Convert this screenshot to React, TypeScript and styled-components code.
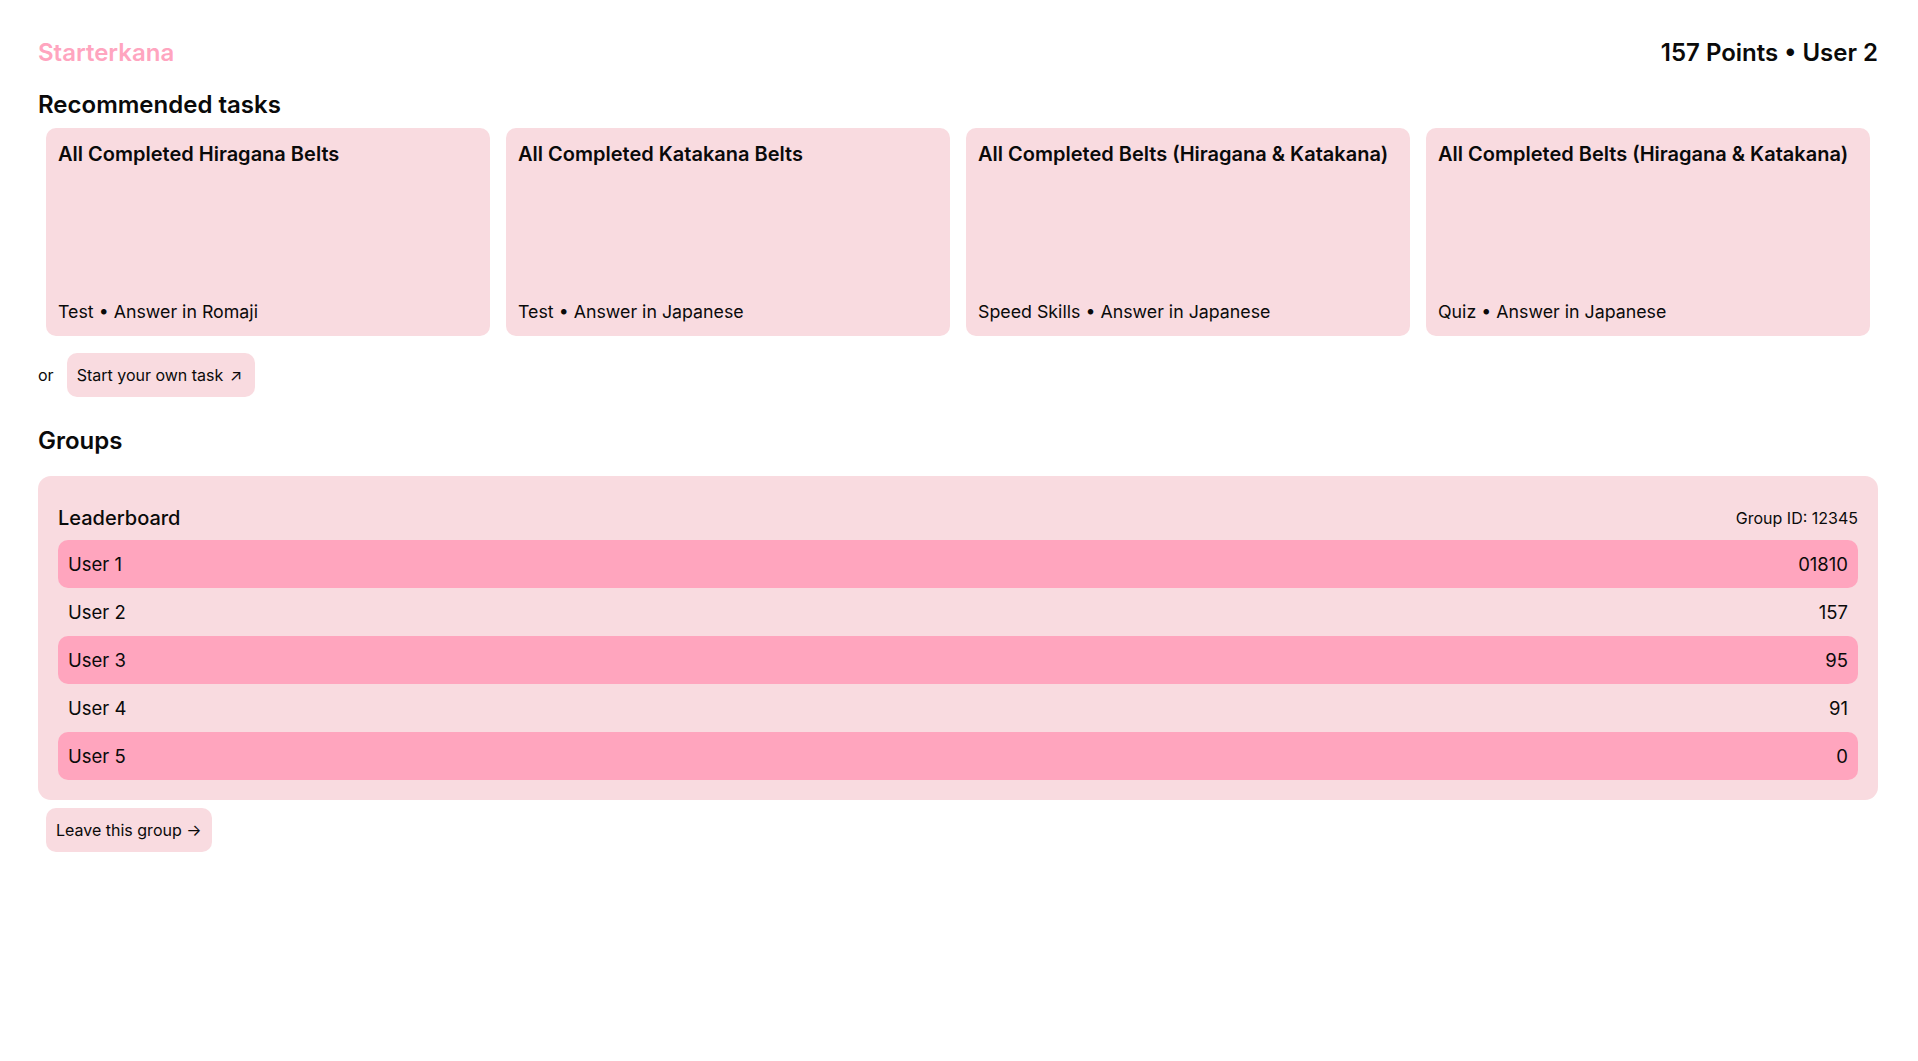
import { styled, createGlobalStyle } from "styled-components";

const GlobalStyle = createGlobalStyle`
  * {
    box-sizing: border-box;
  }

  body {
    margin: 0;
    background: #ffffff;
    color: #0a0a0a;
    font-family: Inter, "Noto Sans", "Liberation Sans", sans-serif;
  }
`;

const tasks = [
  { title: "All Completed Hiragana Belts", meta: "Test • Answer in Romaji" },
  { title: "All Completed Katakana Belts", meta: "Test • Answer in Japanese" },
  {
    title: "All Completed Belts (Hiragana & Katakana)",
    meta: "Speed Skills • Answer in Japanese",
  },
  {
    title: "All Completed Belts (Hiragana & Katakana)",
    meta: "Quiz • Answer in Japanese",
  },
];

const leaderboard = [
  { name: "User 1", points: "01810" },
  { name: "User 2", points: "157" },
  { name: "User 3", points: "95" },
  { name: "User 4", points: "91" },
  { name: "User 5", points: "0" },
];

function App() {
  return (
    <>
      <GlobalStyle />
      <Page>
        <Header>
          <Logo>Starterkana</Logo>
          <UserInfo>157 Points • User 2</UserInfo>
        </Header>

        <SectionTitle>Recommended tasks</SectionTitle>
        <TaskGrid>
          {tasks.map((task, i) => (
            <TaskCard key={i}>
              <TaskTitle>{task.title}</TaskTitle>
              <TaskMeta>{task.meta}</TaskMeta>
            </TaskCard>
          ))}
        </TaskGrid>

        <OwnTaskRow>
          <span>or</span>
          <PinkButton>
            Start your own task <Arrow>↗</Arrow>
          </PinkButton>
        </OwnTaskRow>

        <SectionTitle $spaced>Groups</SectionTitle>
        <GroupBox>
          <GroupHeader>
            <GroupName>Leaderboard</GroupName>
            <GroupId>Group ID: 12345</GroupId>
          </GroupHeader>
          {leaderboard.map((row, i) => (
            <Row key={row.name} $highlight={i % 2 === 0}>
              <span>{row.name}</span>
              <span>{row.points}</span>
            </Row>
          ))}
        </GroupBox>

        <LeaveWrap>
          <PinkButton>Leave this group →</PinkButton>
        </LeaveWrap>
      </Page>
    </>
  );
}

const Page = styled.div`
  padding: 36px 40px 40px 38px;
`;

const Header = styled.header`
  display: flex;
  justify-content: space-between;
  align-items: center;
  height: 34px;
  font-size: 24px;
  line-height: 34px;
  font-weight: 600;
`;

const Logo = styled.div`
  color: #ffa5bf;
`;

const UserInfo = styled.div`
  color: #0a0a0a;
`;

const SectionTitle = styled.h2<{ $spaced?: boolean }>`
  margin: ${(p) => (p.$spaced ? "28px" : "19px")} 0 0;
  font-size: 24px;
  line-height: 32px;
  font-weight: 600;
`;

const TaskGrid = styled.div`
  display: grid;
  grid-template-columns: repeat(4, 1fr);
  gap: 16px;
  margin: 7px 8px 0;
`;

const TaskCard = styled.div`
  display: flex;
  flex-direction: column;
  justify-content: space-between;
  height: 208px;
  padding: 12px;
  background: #f9dbe0;
  border-radius: 10px;
`;

const TaskTitle = styled.div`
  font-size: 20px;
  line-height: 28px;
  font-weight: 600;
`;

const TaskMeta = styled.div`
  font-size: 17.8px;
  line-height: 25px;
`;

const OwnTaskRow = styled.div`
  display: flex;
  align-items: center;
  gap: 13px;
  margin-top: 17px;
  font-size: 16px;
`;

const PinkButton = styled.button`
  padding: 10px;
  border: none;
  border-radius: 10px;
  background: #f9dbe0;
  color: #0a0a0a;
  font-family: inherit;
  font-size: 16px;
  line-height: 24px;
  cursor: pointer;
`;

const Arrow = styled.span`
  display: inline-block;
  margin-left: 2px;
  margin-right: 3px;
`;

const GroupBox = styled.div`
  margin-top: 19px;
  padding: 20px;
  background: #f9dbe0;
  border-radius: 13px;
`;

const GroupHeader = styled.div`
  display: flex;
  justify-content: space-between;
  align-items: center;
  height: 44px;
`;

const GroupName = styled.div`
  font-size: 20px;
  line-height: 28px;
  font-weight: 500;
`;

const GroupId = styled.div`
  font-size: 16px;
  line-height: 24px;
`;

const Row = styled.div<{ $highlight: boolean }>`
  display: flex;
  justify-content: space-between;
  padding: 10px;
  font-size: 18.5px;
  line-height: 28px;
  border-radius: 10px;
  background: ${(p) => (p.$highlight ? "#ffa5be" : "transparent")};
`;

const LeaveWrap = styled.div`
  margin: 8px 0 0 8px;
`;

export default App;
